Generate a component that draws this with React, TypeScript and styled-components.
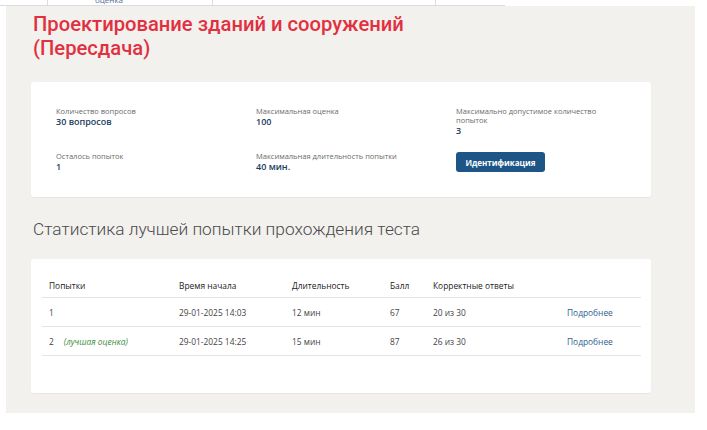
import React from "react";
import styled, { createGlobalStyle } from "styled-components";

const Global = createGlobalStyle`
  html, body { margin: 0; padding: 0; background: #ffffff; }
  body { font-family: "Open Sans", "Liberation Sans", sans-serif; color: #333; }
  * { box-sizing: border-box; }
`;

const TopStrip = styled.div`
  display: flex;
  width: 505px;
  height: 6px;
  border-bottom: 1px solid #dcdcdc;
  overflow: hidden;
`;

const StripCell = styled.div<{ $w: number; $first?: boolean }>`
  width: ${(p) => p.$w}px;
  height: 100%;
  border-left: ${(p) => (p.$first ? "none" : "1px solid #dcdcdc")};
  overflow: hidden;
  padding-left: 47px;
`;

const StripText = styled.span`
  display: block;
  margin-top: -5px;
  font-size: 8px;
  line-height: 10px;
  color: #4d6b91;
  white-space: nowrap;
`;

const Panel = styled.div`
  margin-left: 6px;
  width: 689px;
  background: #f2f1ee;
  padding: 6px 44px 20px 25px;
`;

const Title = styled.h1`
  margin: 0 0 22px 2px;
  font-family: Roboto, "Liberation Sans", sans-serif;
  font-weight: 500;
  font-size: 20.2px;
  line-height: 24px;
  color: #e1303f;
`;

const Card = styled.div<{ $pad: string }>`
  background: #ffffff;
  border-radius: 3px;
  box-shadow: 0 1px 1px rgba(0, 0, 0, 0.05);
  padding: ${(p) => p.$pad};
`;

const InfoGrid = styled.div`
  display: grid;
  grid-template-columns: 200px 200px 150px;
  row-gap: 16px;
  align-items: start;
`;

const InfoItem = styled.div`
  display: flex;
  flex-direction: column;
`;

const Label = styled.span`
  font-size: 7.5px;
  line-height: 9px;
  color: #6a6a6a;
`;

const Value = styled.span`
  font-size: 9px;
  line-height: 11px;
  font-weight: 600;
  color: #1b3b5f;
`;

const Button = styled.button`
  width: 89px;
  height: 20px;
  border: none;
  border-radius: 3px;
  background: #1e5587;
  color: #ffffff;
  font-family: "Open Sans", "Liberation Sans", sans-serif;
  font-size: 8px;
  font-weight: 700;
  padding: 0;
  cursor: pointer;
`;

const Heading = styled.h2`
  margin: 22px 0 20px 2px;
  font-family: Roboto, "Liberation Sans", sans-serif;
  font-weight: 300;
  font-size: 17.3px;
  line-height: 20px;
  color: #4a4a4a;
`;

const Row = styled.div<{ $head?: boolean }>`
  display: grid;
  grid-template-columns: 130px 113px 98px 43px 134px 1fr;
  align-items: center;
  height: ${(p) => (p.$head ? "24px" : "29px")};
  border-bottom: 1px solid #e4e4e4;
  font-size: 8.4px;
  color: ${(p) => (p.$head ? "#222" : "#444")};
  font-weight: ${(p) => (p.$head ? 500 : 400)};
`;

const Cell = styled.div`
  padding-left: 7px;
  white-space: nowrap;
`;

const Best = styled.span`
  margin-left: 10px;
  font-style: italic;
  color: #3d8c3d;
`;

const Link = styled.a`
  color: #2b5e8f;
  text-decoration: none;
`;

const attempts = [
  { n: "1", best: false, start: "29-01-2025 14:03", dur: "12 мин", score: "67", correct: "20 из 30" },
  { n: "2", best: true, start: "29-01-2025 14:25", dur: "15 мин", score: "87", correct: "26 из 30" },
];

export default function App() {
  return (
    <>
      <Global />
      <TopStrip>
        <StripCell $w={28} $first />
        <StripCell $w={172}>
          <StripText>оценка</StripText>
        </StripCell>
        <StripCell $w={234} />
        <StripCell $w={71} />
      </TopStrip>
      <Panel>
        <Title>
          Проектирование зданий и сооружений
          <br />
          (Пересдача)
        </Title>
        <Card $pad="25px 25px 25px 25px">
          <InfoGrid>
            <InfoItem>
              <Label>Количество вопросов</Label>
              <Value>30 вопросов</Value>
            </InfoItem>
            <InfoItem>
              <Label>Максимальная оценка</Label>
              <Value>100</Value>
            </InfoItem>
            <InfoItem>
              <Label>Максимально допустимое количество попыток</Label>
              <Value>3</Value>
            </InfoItem>
            <InfoItem>
              <Label>Осталось попыток</Label>
              <Value>1</Value>
            </InfoItem>
            <InfoItem>
              <Label>Максимальная длительность попытки</Label>
              <Value>40 мин.</Value>
            </InfoItem>
            <InfoItem>
              <Button>Идентификация</Button>
            </InfoItem>
          </InfoGrid>
        </Card>
        <Heading>Статистика лучшей попытки прохождения теста</Heading>
        <Card $pad="15px 10px 37px 11px">
          <Row $head>
            <Cell>Попытки</Cell>
            <Cell>Время начала</Cell>
            <Cell>Длительность</Cell>
            <Cell>Балл</Cell>
            <Cell>Корректные ответы</Cell>
            <Cell />
          </Row>
          {attempts.map((a) => (
            <Row key={a.n}>
              <Cell>
                {a.n}
                {a.best && <Best>(лучшая оценка)</Best>}
              </Cell>
              <Cell>{a.start}</Cell>
              <Cell>{a.dur}</Cell>
              <Cell>{a.score}</Cell>
              <Cell>{a.correct}</Cell>
              <Cell>
                <Link href="#">Подробнее</Link>
              </Cell>
            </Row>
          ))}
        </Card>
      </Panel>
    </>
  );
}
